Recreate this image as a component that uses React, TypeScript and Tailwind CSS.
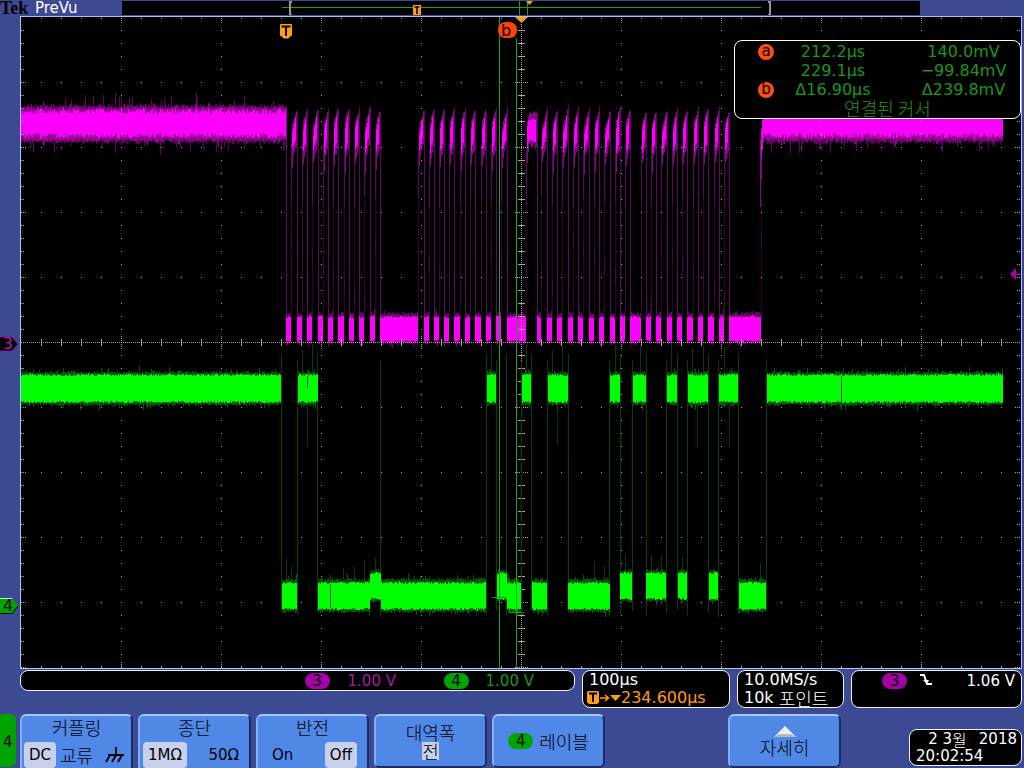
import type { ReactNode } from "react";

const FONT = "font-['DejaVu_Sans','Noto_Sans_CJK_KR',sans-serif]";
const KO = "font-['Noto_Sans_CJK_KR',sans-serif] font-light text-[18px] leading-5";

type Span = [number, number];

function makeRandom(seed: number) {
  let s = seed;
  return () => {
    s = (s * 1664525 + 1013904223) % 4294967296;
    return s / 4294967296;
  };
}

// One vertical stroke per pixel column gives the grainy edge of a noisy trace.
function noise(spans: Span[], top: number, bottom: number, jitter: number, spike: number, seed: number) {
  const rnd = makeRandom(seed);
  let d = "";
  for (const [a, b] of spans) {
    for (let x = a; x < b; x++) {
      const up = rnd() * jitter + (rnd() < 0.09 ? rnd() * spike : 0);
      const down = rnd() * jitter + (rnd() < 0.09 ? rnd() * spike : 0);
      d += `M${x + 0.5} ${Math.round(top - up)}V${Math.round(bottom + down)}`;
    }
  }
  return d;
}

const CLOCK_LOW: Span[] = [
  [286, 291], [297, 302], [307, 312], [318, 323], [328, 333], [338, 344], [349, 354], [359, 364], [370, 375],
  [380, 418], [424, 429], [434, 439], [444, 449], [454, 460], [465, 470], [475, 481], [486, 491], [496, 501],
  [507, 526], [537, 541], [547, 552], [557, 562], [568, 573], [578, 583], [589, 594], [599, 604], [610, 615],
  [620, 625], [630, 641], [646, 651], [656, 661], [667, 672], [677, 682], [687, 693], [698, 703], [708, 714],
  [719, 724], [729, 761],
];
const CLOCK_IDLE: Span[] = [[21, 286], [763, 1003]];
const DATA_HIGH: Span[] = [
  [21, 281], [298, 318], [487, 496], [522, 531], [548, 568], [610, 620], [633, 646], [667, 677], [688, 708],
  [719, 738], [767, 1003],
];
const DATA_LOW: Span[] = [[282, 297], [318, 370], [381, 486], [507, 521], [532, 547], [568, 610], [739, 766]];
const DATA_MID: Span[] = [[370, 381], [497, 507], [620, 632], [646, 666], [678, 687], [709, 718]];

function pulses() {
  const rnd = makeRandom(77);
  let dim = "";
  let mid = "";
  let bright = "";
  for (let i = 0; i < CLOCK_LOW.length - 1; i++) {
    const start = CLOCK_LOW[i][1];
    const end = CLOCK_LOW[i + 1][0];
    const w = end - start;
    const top = 115 + Math.round(rnd() * 3);
    dim += `M${start + 0.5} ${142 + Math.round(rnd() * 8)}V${196 + Math.round(rnd() * 12)}`;
    mid += `M${start + 1.5} ${top + 12}V${162 + Math.round(rnd() * 12)}`;
    for (let k = 1; k < w; k++) {
      const rise = w > 8 ? Math.max(0, 3 - k) * 6 : (w - 1 - k) * 5;
      const low = w > 8 ? Math.max(140, 162 - k * 7) : 159 - k * 4;
      mid += `M${start + k + 0.5} ${top - 4 + Math.round(rise * 0.7 - rnd() * 3)}V${low + 3 + Math.round(rnd() * 5)}`;
      if (k > 1) bright += `M${start + k - 0.5} ${top + rise + Math.round(rnd() * 3)}V${low - 2 + Math.round(rnd() * 4)}`;
    }
    dim += `M${end + 0.5} ${top - 4 - Math.round(rnd() * 7)}V170`;
  }
  return { dim, mid, bright };
}

const PULSES = pulses();
const CLOCK_FALL = CLOCK_LOW.map(([a]) => `M${a + 0.5} 115V318`).join("");
const CLOCK_RISE = CLOCK_LOW.map(([, b]) => `M${b + 0.5} 200V318`).join("");
const CLOCK_FLECKS = CLOCK_LOW.map(([, b], i) => {
  const y = 232 + ((i * 9) % 66);
  return `M${b + 0.5} ${y}v16`;
}).join("");
const DATA_EDGES = [281, 297, 317, 380, 486, 496, 506, 521, 531, 547, 568, 609, 620, 632, 646, 666, 677, 687, 708, 718, 738, 766]
  .map((x, i) => `M${x + 0.5} ${354 + ((i * 7) % 14)}V${610 + ((i * 5) % 8)}`)
  .join("");
const DATA_SPIKES =
  "M302.5 350V375M312.5 344V375M526.5 344V375M552.5 350V375M562.5 346V375M615.5 345V375M640.5 346V375M671.5 344V375M692.5 348V375M703.5 346V375M724.5 347V375M491.5 344V375" +
  "M307.5 405V447M557.5 405V444M697.5 405V447M729.5 405V447M568.5 405V450M286.5 558V580M291.5 566V580M343.5 568V580M354.5 566V580M364.5 560V580M375.5 558V574M594.5 562V580M604.5 565V580M625.5 554V574M651.5 556V574M661.5 555V574M682.5 557V574M760.5 563V580";

function gridPath() {
  let d = "";
  const dot = (x: number, y: number) => {
    d += `M${x} ${y}h1v1h-1z`;
  };
  for (let x = 121; x < 1021; x += 100) {
    for (let y = 30; y < 668; y += 13) dot(x, y);
    for (const o of [18, 20, 22, 662, 664, 666]) dot(x, o);
  }
  for (let y = 82; y < 668; y += 65) {
    for (let x = 41; x < 1021; x += 20) dot(x, y);
    for (const o of [21, 23, 25, 1015, 1017, 1019]) dot(o, y);
  }
  for (let x = 41; x < 1021; x += 20) {
    dot(x, 18);
    dot(x, 666);
    const r = (x - 21) % 100 === 0 ? 6 : 3;
    for (let k = -r; k <= r; k += r > 3 ? 2 : 1) dot(x, 342 + k);
  }
  for (let y = 30; y < 668; y += 13) {
    dot(21, y);
    dot(23, y);
    dot(1017, y);
    dot(1019, y);
    const r = (y - 17) % 65 === 0 ? 6 : 3;
    for (let k = -r; k <= r; k += r > 3 ? 2 : 1) dot(521 + k, y);
  }
  for (let x = 21; x < 1021; x += 2) dot(x, 342);
  for (let y = 18; y < 668; y += 2) dot(521, y);
  return d;
}

function Traces() {
  return (
    <svg viewBox="21 17 1000 651" className="block h-auto w-full" role="img" aria-label="CH3 / CH4">
      <g fill="none" shapeRendering="crispEdges">
        <path d={CLOCK_RISE} stroke="#2a062a" />
        <path d={CLOCK_FALL} stroke="#5c0c5c" />
        <path d={CLOCK_FLECKS} stroke="#450845" />
        <path d={noise(CLOCK_IDLE, 108, 140, 4, 12, 3)} stroke="#600060" />
        <path d={noise(CLOCK_IDLE, 110, 138, 4, 5, 4)} stroke="#980098" />
        <path d={noise(CLOCK_IDLE, 114, 133, 5, 2, 5)} stroke="#ff00ff" />
        <path d={noise(CLOCK_LOW, 315, 342, 3, 4, 6)} stroke="#6a006a" />
        <path d={noise(CLOCK_LOW, 318, 340, 2, 1, 7)} stroke="#ff00ff" />
        <path d={PULSES.dim} stroke="#5a065a" />
        <path d={PULSES.mid} stroke="#800880" />
        <path d={PULSES.bright} stroke="#ff00ff" />
        <path d="M760.5 140V207M761.5 130V180" stroke="#800880" />
        <path d="M761.5 128V158M762.5 120V150" stroke="#e000e0" />
        <path d="M286.5 106V150" stroke="#800880" />
      </g>
      <path d={gridPath()} fill="#aaaa9a" shapeRendering="crispEdges" />
      <g fill="none" shapeRendering="crispEdges">
        <path d={DATA_EDGES} stroke="#0c3c0c" />
        <path d={DATA_SPIKES} stroke="#0a3a0a" />
        <path d={noise(DATA_HIGH, 374, 403, 3, 5, 11)} stroke="#005c00" />
        <path d={noise(DATA_HIGH, 376, 401, 2, 1, 12)} stroke="#00ff00" />
        <path d={noise(DATA_LOW, 581, 610, 3, 5, 13)} stroke="#005c00" />
        <path d={noise(DATA_LOW, 584, 608, 2, 1, 14)} stroke="#00ff00" />
        <path d={noise(DATA_MID, 572, 599, 3, 5, 15)} stroke="#005c00" />
        <path d={noise(DATA_MID, 574, 598, 2, 1, 16)} stroke="#00ff00" />
        <path d="M330.5 584V608M841.5 376V402M307.5 376V388" stroke="#0a500a" />
      </g>
      <g fill="#1ca01c" shapeRendering="crispEdges">
        <rect x="499" y="17" width="1" height="651" />
        <rect x="516" y="38" width="1" height="630" />
        <rect x="492" y="597" width="14" height="1" />
        <rect x="509" y="612" width="15" height="1" />
      </g>
      <path d="M515 17h13l-6.500 6z" fill="#ff9c18" />
      <path d="M280 25q0-1 1-1h10q1 0 1 1v10q0 1-1 1l-3 2.500h-4l-3-2.500q-1 0-1-1z" fill="#ff9c18" />
      <path d="M281.500 26.500h9M286 26.500V36" stroke="#000" strokeWidth="2" fill="none" />
      <path d="M505 22h5q7 1 7 8t-7 8h-5q-7-1-7-8t7-8z" fill="#ff4400" />
      <text x="501" y="36" fontSize="16" className="font-['DejaVu_Sans',sans-serif]">b</text>
      <path d="M1010 274l6-6v5.500h5v1.500h-5v5z" fill="#a800a8" />
    </svg>
  );
}

function Overview() {
  return (
    <div className="mr-[104px] h-[14px] flex-1 bg-black">
      <svg viewBox="122 1 798 14" className="block h-[14px] w-full" aria-hidden="true">
        <g shapeRendering="crispEdges" fill="#1ca01c">
          <rect x="282" y="7" width="479" height="1" />
          <rect x="519" y="1" width="1" height="14" />
          <rect x="527" y="1" width="1" height="14" />
        </g>
        <g shapeRendering="crispEdges" fill="none">
          <path d="M292 1.500h-2V14.500h2" stroke="#969696" strokeWidth="2" />
          <path d="M768 1.500h2V14.500h-2" stroke="#969696" strokeWidth="2" />
        </g>
        <path d="M526 1h7l-3.500 4z" fill="#ff9c18" />
        <path d="M413 5h8v10h-8z" fill="#ff9c18" />
        <path d="M414.500 7h5M417 7V14" stroke="#000" strokeWidth="1.500" />
      </svg>
    </div>
  );
}

function ChannelPill({ n, color }: { n: string; color: string }) {
  return (
    <span className={`flex h-4 w-[25px] items-center justify-center rounded-full text-[15px] leading-4 text-black ${color}`}>
      {n}
    </span>
  );
}

function CursorBadge({ name }: { name: string }) {
  return (
    <span className="flex h-4 w-4 items-center justify-center rounded-full bg-[#ff4c10] pb-px text-[15px] leading-4 text-black">
      {name}
    </span>
  );
}

function CursorReadout() {
  return (
    <div className="absolute top-[23px] right-0 w-[287px] rounded-lg border border-white bg-black pt-px text-[16px] leading-[19px] text-[#1c961c]">
      <table className="w-full table-fixed border-collapse text-center">
        <tbody>
          <tr className="h-[19px]">
            <td className="w-[58px] p-0 pl-[23px]"><CursorBadge name="a" /></td>
            <td className="w-20 p-0">212.2µs</td>
            <td className="p-0 pl-[34px]">140.0mV</td>
          </tr>
          <tr className="h-[19px]">
            <td className="p-0" />
            <td className="p-0">229.1µs</td>
            <td className="p-0 pl-[34px]">−99.84mV</td>
          </tr>
          <tr className="h-[19px]">
            <td className="p-0 pl-[23px]"><CursorBadge name="b" /></td>
            <td className="p-0">Δ16.90µs</td>
            <td className="p-0 pl-[34px]">Δ239.8mV</td>
          </tr>
        </tbody>
      </table>
      <p className="pl-5 text-center font-['Noto_Sans_CJK_KR',sans-serif] text-[18px] leading-[19px] font-light">연결된 커서</p>
    </div>
  );
}

function Panel({ className, children }: { className: string; children: ReactNode }) {
  return <div className={`rounded-lg border border-[#eef2ff] bg-black text-white ${className}`}>{children}</div>;
}

function MenuButton({ cut, className, children }: { cut?: boolean; className?: string; children: ReactNode }) {
  const edge = cut
    ? "rounded-t-md border-t-2 border-l-2 border-r-2"
    : "mb-px rounded-md border-2 border-b-[#1c2c60]";
  return (
    <button
      type="button"
      className={`flex h-full flex-col items-center border-t-[#a4c8fc] border-l-[#80b0fc] border-r-[#1c2c60] bg-[#5088e8] text-black ${edge} ${className ?? ""}`}
    >
      {children}
    </button>
  );
}

function Chosen({ children }: { children: ReactNode }) {
  return <span className="rounded-sm bg-[#c8d0ec] px-[5px]">{children}</span>;
}

export default function App() {
  return (
    <main className={`flex min-h-screen flex-col overflow-hidden bg-[#3c4a94] ${FONT}`}>
      <header className="flex h-4 items-center">
        <h1 className="flex w-[122px] items-center">
          <span className="w-[35px] font-['Liberation_Serif',serif] text-[18px] leading-4 font-bold text-black">Tek</span>
          <span className="text-[15px] leading-4 text-white">PreVu</span>
        </h1>
        <Overview />
      </header>

      <section className="relative flex pr-0.5">
        <div className="relative w-5 shrink-0">
          <div className="absolute top-[320px] left-0 h-4 w-[19px]">
            <svg viewBox="0 0 19 16" className="absolute inset-0 h-4 w-[19px]" aria-hidden="true">
              <path d="M0 1h12l6 7-6 7H0" fill="#000" stroke="#901090" />
            </svg>
            <span className="relative block w-4 text-center text-[15px] leading-4 text-[#b020b0]">3</span>
          </div>
          <div className="absolute top-[582px] left-0 h-4 w-[19px]">
            <svg viewBox="0 0 19 16" className="absolute inset-0 h-4 w-[19px]" aria-hidden="true">
              <path d="M0 0h12l6 8-6 8H0z" fill="#00a400" />
              <path d="M0 15.500h12l6-7.500" fill="none" stroke="#000" />
              <path d="M0 .5h12" stroke="#c0f0c0" />
            </svg>
            <span className="relative block w-4 text-center text-[15px] leading-4 text-black">4</span>
          </div>
        </div>
        <div className="relative flex-1 border border-[#a8c4f4] bg-black">
          <Traces />
          <CursorReadout />
        </div>
      </section>

      <section className="mt-px flex h-[38px] items-start gap-[7px] pr-0.5 pl-5 text-[16px] leading-[18px]">
        <Panel className="flex h-[21px] flex-1 items-center justify-end pr-10 text-[15px]">
          <ChannelPill n="3" color="bg-[#a400a4]" />
          <span className="w-[114px] pl-[18px] text-[#a41ca4]">1.00 V</span>
          <ChannelPill n="4" color="bg-[#00a400]" />
          <span className="pl-[17px] text-[#1c961c]">1.00 V</span>
        </Panel>
        <Panel className="h-[38px] w-[148px] px-1.5">
          <p>100µs</p>
          <p className="flex items-center text-[#ff9c18]">
            <svg viewBox="0 0 34 14" className="-ml-0.5 h-3.5 w-[34px] shrink-0" aria-hidden="true">
              <path d="M0 1.500Q0 0 1.500 0h9Q12 0 12 1.500v10L10 13H2L0 11.500z" fill="#ff9c18" />
              <path d="M2 2.500h8M6 2.500V11" stroke="#000" strokeWidth="2" />
              <path d="M13 7h8M18 4l3.500 3L18 10" fill="none" stroke="#ff9c18" strokeWidth="1.500" />
              <path d="M23 4h11l-5.500 6z" fill="#ff9c18" />
            </svg>
            234.600µs
          </p>
        </Panel>
        <Panel className="h-[38px] w-[107px] px-1.5 whitespace-nowrap">
          <p>10.0MS/s</p>
          <p className="flex h-[18px] items-center gap-[5px]">
            <span>10k</span>
            <span className="font-['Noto_Sans_CJK_KR',sans-serif] text-[18px] font-light">포인트</span>
          </p>
        </Panel>
        <Panel className="flex h-[38px] w-[171px] items-start pt-0.5 pr-1.5 pl-[30px] text-[15px] leading-4">
          <ChannelPill n="3" color="bg-[#a400a4]" />
          <svg viewBox="0 0 14 14" className="ml-3 h-3.5 w-3.5" aria-hidden="true">
            <path d="M1 2h4l3 9h5" fill="none" stroke="#fff" strokeWidth="2" />
            <path d="M4 7h6L8 11z" fill="#fff" />
          </svg>
          <span className="ml-auto">1.06 V</span>
        </Panel>
      </section>

      <footer className="mt-1.5 flex h-[54px] gap-1 pr-0.5">
        <div className="flex h-[53px] w-4 shrink-0 items-center rounded-r-md bg-[#00a400] pt-1 pl-[3px] text-[15px] text-black">4</div>
        <nav className="grid w-[821px] grid-cols-7 gap-[5px]">
          <MenuButton cut>
            <span className={`mt-px ${KO}`}>커플링</span>
            <span className="mt-1 flex h-[27px] w-full items-center px-0.5 text-[15px] leading-[26px]">
              <Chosen>DC</Chosen>
              <span className={`ml-1 ${KO}`}>교류</span>
              <svg viewBox="0 0 20 18" className="mr-1 ml-auto h-[18px] w-5" aria-hidden="true">
                <path d="M3 9h16M11 1v8M5 9l-4 7M11 9l-4 7M17 9l-4 7" fill="none" stroke="#000" strokeWidth="1.800" />
              </svg>
            </span>
          </MenuButton>
          <MenuButton cut>
            <span className={`mt-px ${KO}`}>종단</span>
            <span className="mt-1 flex h-[27px] w-full items-center justify-between pr-2.5 pl-[3px] text-[15px] leading-[26px]">
              <Chosen>1MΩ</Chosen>
              <span>50Ω</span>
            </span>
          </MenuButton>
          <MenuButton cut>
            <span className={`mt-px ${KO}`}>반전</span>
            <span className="mt-1 flex h-[27px] w-full items-center justify-between pr-2.5 pl-3.5 text-[15px] leading-[26px]">
              <span>On</span>
              <Chosen>Off</Chosen>
            </span>
          </MenuButton>
          <MenuButton className="justify-center">
            <span className={KO}>대역폭</span>
            <span className="bg-[#c8d0ec] font-['Noto_Sans_CJK_KR',sans-serif] text-[18px] leading-[18px] font-light">전</span>
          </MenuButton>
          <MenuButton className="justify-center">
            <span className="flex items-center gap-1.5">
              <ChannelPill n="4" color="bg-[#00a400]" />
              <span className={KO}>레이블</span>
            </span>
          </MenuButton>
          <MenuButton className="col-start-7 justify-center">
            <svg viewBox="0 0 22 11" className="h-[11px] w-[22px]" aria-hidden="true">
              <path d="M11 0l11 11H0z" fill="#f0f0f0" />
              <path d="M0 11l5-3h12l5 3z" fill="#b8b8b8" />
            </svg>
            <span className={KO}>자세히</span>
          </MenuButton>
        </nav>
        <Panel className="mt-[15px] ml-auto h-[37px] w-[113px] px-1 pt-px text-[15px] leading-[17px] whitespace-nowrap">
          <p className="flex h-[17px] justify-end gap-3">
            <span className="flex">
              <span>2 3</span>
              <span className="font-['Noto_Sans_CJK_KR',sans-serif] text-[16px] font-light">월</span>
            </span>
            <span>2018</span>
          </p>
          <p className="pl-0.5">20:02:54</p>
        </Panel>
      </footer>
    </main>
  );
}
